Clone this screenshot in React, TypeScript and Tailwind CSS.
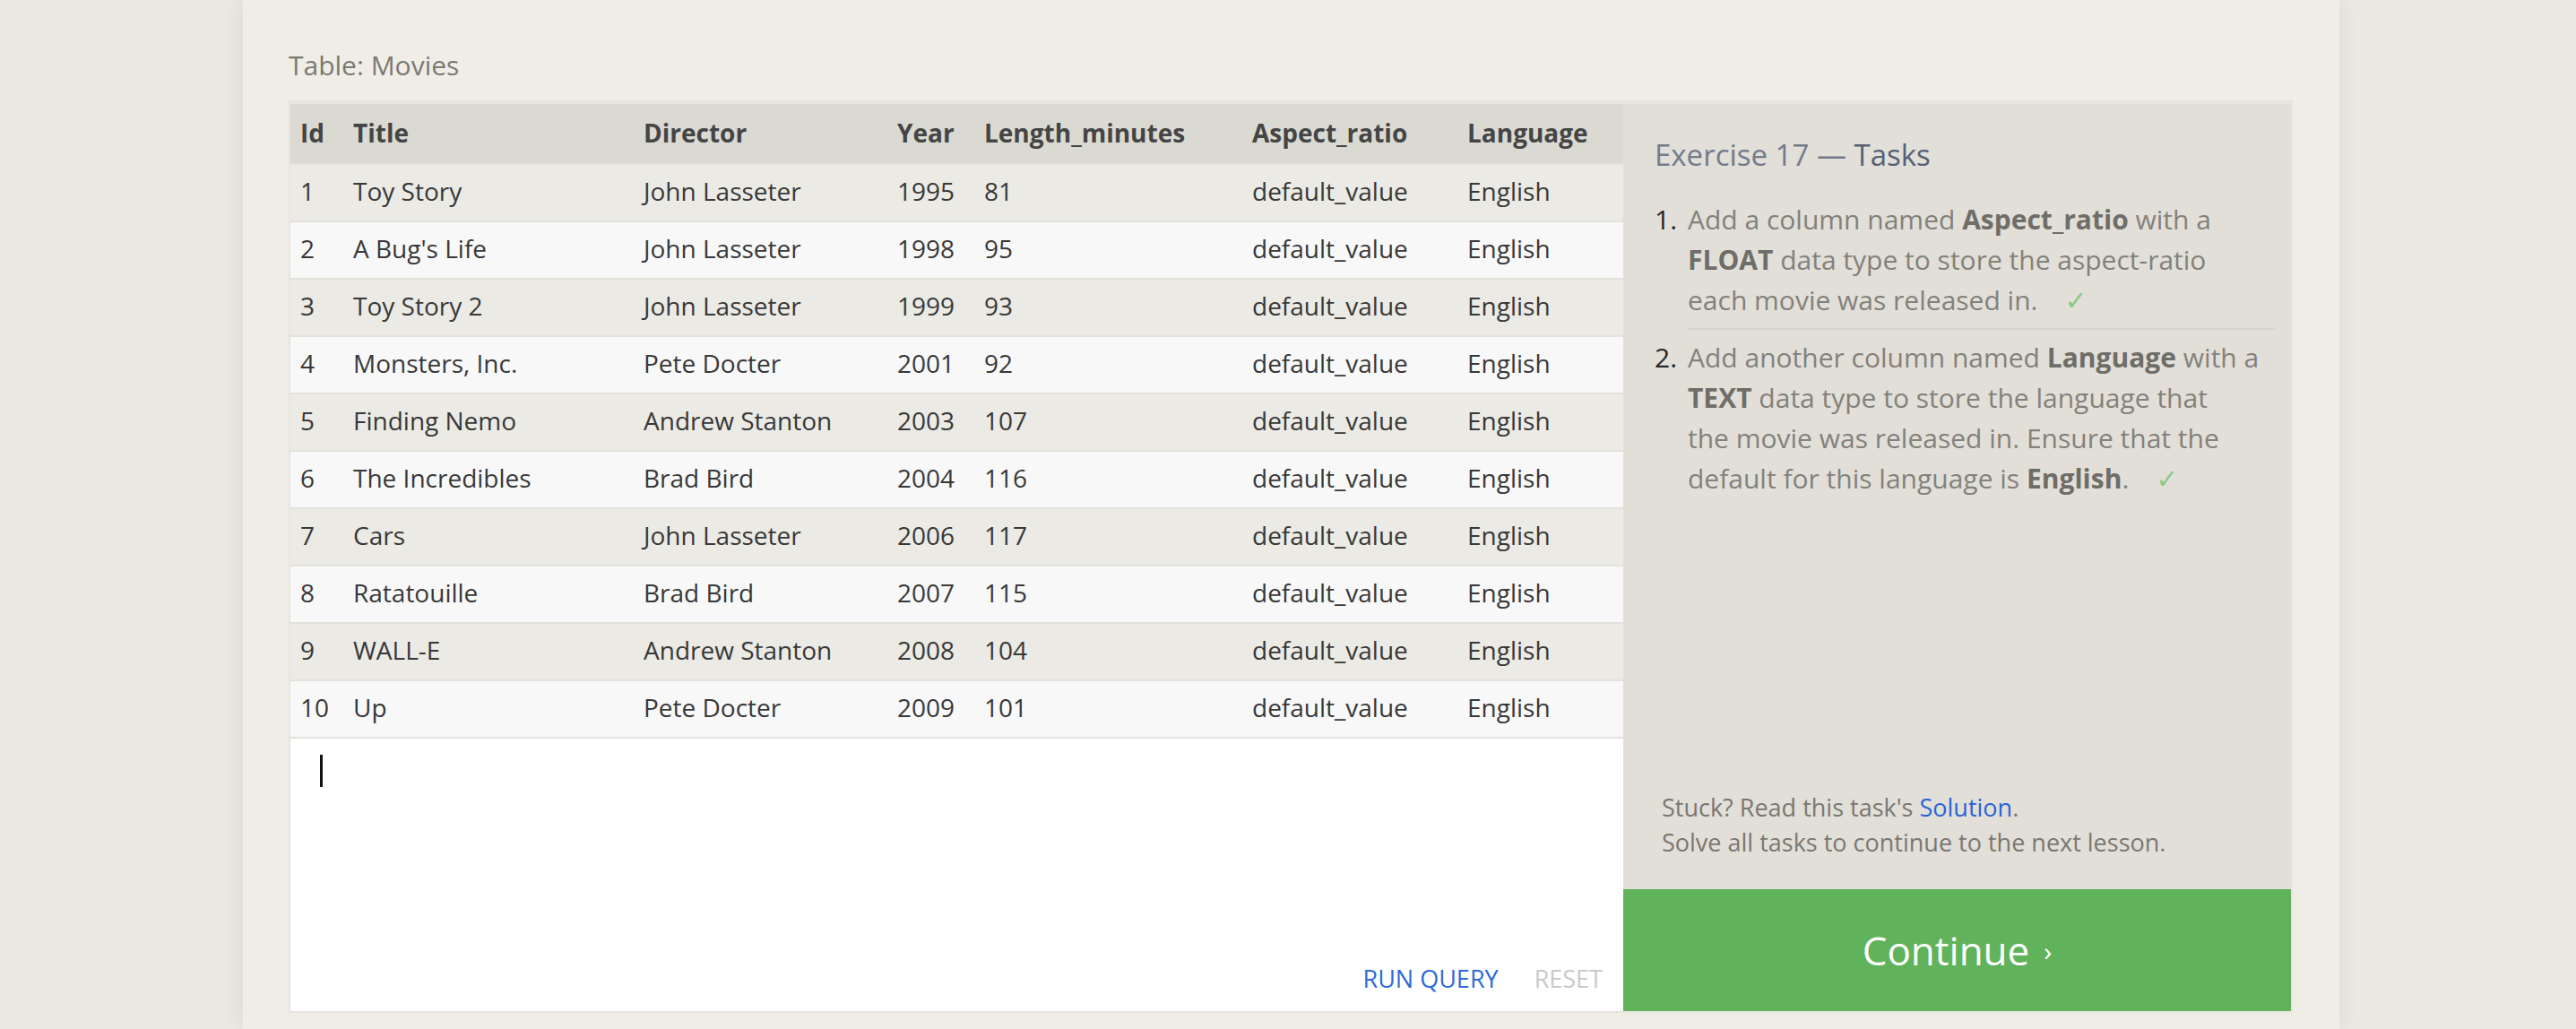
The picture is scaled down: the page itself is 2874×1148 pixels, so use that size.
import React from "react";

type Movie = {
    id: number;
    title: string;
    director: string;
    year: number;
    length: number;
};

const movies: Movie[] = [
    { id: 1, title: "Toy Story", director: "John Lasseter", year: 1995, length: 81 },
    { id: 2, title: "A Bug's Life", director: "John Lasseter", year: 1998, length: 95 },
    { id: 3, title: "Toy Story 2", director: "John Lasseter", year: 1999, length: 93 },
    { id: 4, title: "Monsters, Inc.", director: "Pete Docter", year: 2001, length: 92 },
    { id: 5, title: "Finding Nemo", director: "Andrew Stanton", year: 2003, length: 107 },
    { id: 6, title: "The Incredibles", director: "Brad Bird", year: 2004, length: 116 },
    { id: 7, title: "Cars", director: "John Lasseter", year: 2006, length: 117 },
    { id: 8, title: "Ratatouille", director: "Brad Bird", year: 2007, length: 115 },
    { id: 9, title: "WALL-E", director: "Andrew Stanton", year: 2008, length: 104 },
    { id: 10, title: "Up", director: "Pete Docter", year: 2009, length: 101 },
];

const columns = [
    { label: "Id", width: "w-[59px]" },
    { label: "Title", width: "w-[324px]" },
    { label: "Director", width: "w-[283px]" },
    { label: "Year", width: "w-[97px]" },
    { label: "Length_minutes", width: "w-[299px]" },
    { label: "Aspect_ratio", width: "w-[240px]" },
    { label: "Language", width: "w-[185px]" },
];

function Check() {
    return <span className="ml-[30px] text-[30px] text-[#8bcb86] font-['DejaVu_Sans',sans-serif]">✓</span>;
}

function MoviesTable() {
    return (
        <table className="w-full table-fixed border-separate border-spacing-0 text-[28px] text-[#383838]">
            <colgroup>
                {columns.map((c) => (
                    <col key={c.label} className={c.width} />
                ))}
            </colgroup>
            <thead>
                <tr className="h-[68px] bg-[#dadad2]">
                    {columns.map((c) => (
                        <th
                            key={c.label}
                            className="px-[11px] pb-[2px] text-left font-bold text-[#454545] border-b-2 border-[#e4e3de] whitespace-nowrap"
                        >
                            {c.label}
                        </th>
                    ))}
                </tr>
            </thead>
            <tbody>
                {movies.map((m, i) => (
                    <tr key={m.id} className={`h-[64px] ${i % 2 === 0 ? "bg-[#ebeae4]" : "bg-[#f8f8f8]"}`}>
                        {[m.id, m.title, m.director, m.year, m.length, "default_value", "English"].map((v, j) => (
                            <td
                                key={j}
                                className="px-[11px] pb-[4px] border-b-2 border-[#e2e1dc] whitespace-nowrap"
                            >
                                {v}
                            </td>
                        ))}
                    </tr>
                ))}
            </tbody>
        </table>
    );
}

export default function App() {
    return (
        <div className="min-h-screen bg-[#ebe8e4] flex justify-center pl-[7px] font-['Open_Sans',sans-serif]">
            <div className="w-[2339px] min-h-screen bg-[#f0ede6] pl-[51px] pr-[52px] pt-[55px] shadow-[0_0_24px_rgba(0,0,0,0.07)]">
                <p className="text-[30px] leading-[36px] text-[#7a7a74] mb-[21px]">Table: Movies</p>

                <div className="flex border-2 border-t-4 border-[#e5e4de]">
                    {/* table + query editor */}
                    <div className="w-[1487px] flex flex-col">
                        <MoviesTable />
                        <div className="h-[304px] bg-white flex flex-col">
                            <span className="block mt-[18px] ml-[33px] w-[3px] h-[36px] bg-[#111]" />
                            <div className="mt-auto flex justify-end gap-[40px] pr-[23px] pb-[23px] text-[27px] leading-[27px]">
                                <button className="text-[#2d6ad8]">RUN QUERY</button>
                                <button className="text-[#c9c9c9]">RESET</button>
                            </div>
                        </div>
                    </div>

                    {/* tasks */}
                    <div className="flex-1 bg-[#e1dfd8] flex flex-col">
                        <div className="pt-[37px] pl-[35px] pr-[17px]">
                            <h2 className="text-[33px] leading-[40px] text-[#737b8b]">
                                Exercise 17 — <span className="text-[#566174]">Tasks</span>
                            </h2>
                            <ol className="mt-[29px] text-[30px] leading-[45px] text-[#83817b]">
                                <li className="flex">
                                    <span className="w-[37px] shrink-0 text-[#262626]">1.</span>
                                    <div className="flex-1 pb-2 border-b-2 border-[#d6d4cc] whitespace-nowrap">
                                        Add a column named <b className="text-[#6f6d68]">Aspect_ratio</b> with a
                                        <br />
                                        <b className="text-[#6f6d68]">FLOAT</b> data type to store the aspect-ratio
                                        <br />
                                        each movie was released in.
                                        <Check />
                                    </div>
                                </li>
                                <li className="flex pt-2">
                                    <span className="w-[37px] shrink-0 text-[#262626]">2.</span>
                                    <div className="flex-1 whitespace-nowrap">
                                        Add another column named <b className="text-[#6f6d68]">Language</b> with a
                                        <br />
                                        <b className="text-[#6f6d68]">TEXT</b> data type to store the language that
                                        <br />
                                        the movie was released in. Ensure that the
                                        <br />
                                        default for this language is <b className="text-[#6f6d68]">English</b>.
                                        <Check />
                                    </div>
                                </li>
                            </ol>
                        </div>

                        <div className="mt-auto pl-[43px] pb-[33px] text-[27px] leading-[39px] text-[#7a7772]">
                            <p>
                                Stuck? Read this task's <a className="text-[#2a64d8]">Solution</a>.
                            </p>
                            <p>Solve all tasks to continue to the next lesson.</p>
                        </div>

                        <button className="h-[136px] bg-[#60b35a] text-white text-[44px] flex items-center justify-center">
                            Continue<span className="ml-[16px] text-[30px]">›</span>
                        </button>
                    </div>
                </div>
            </div>
        </div>
    );
}
